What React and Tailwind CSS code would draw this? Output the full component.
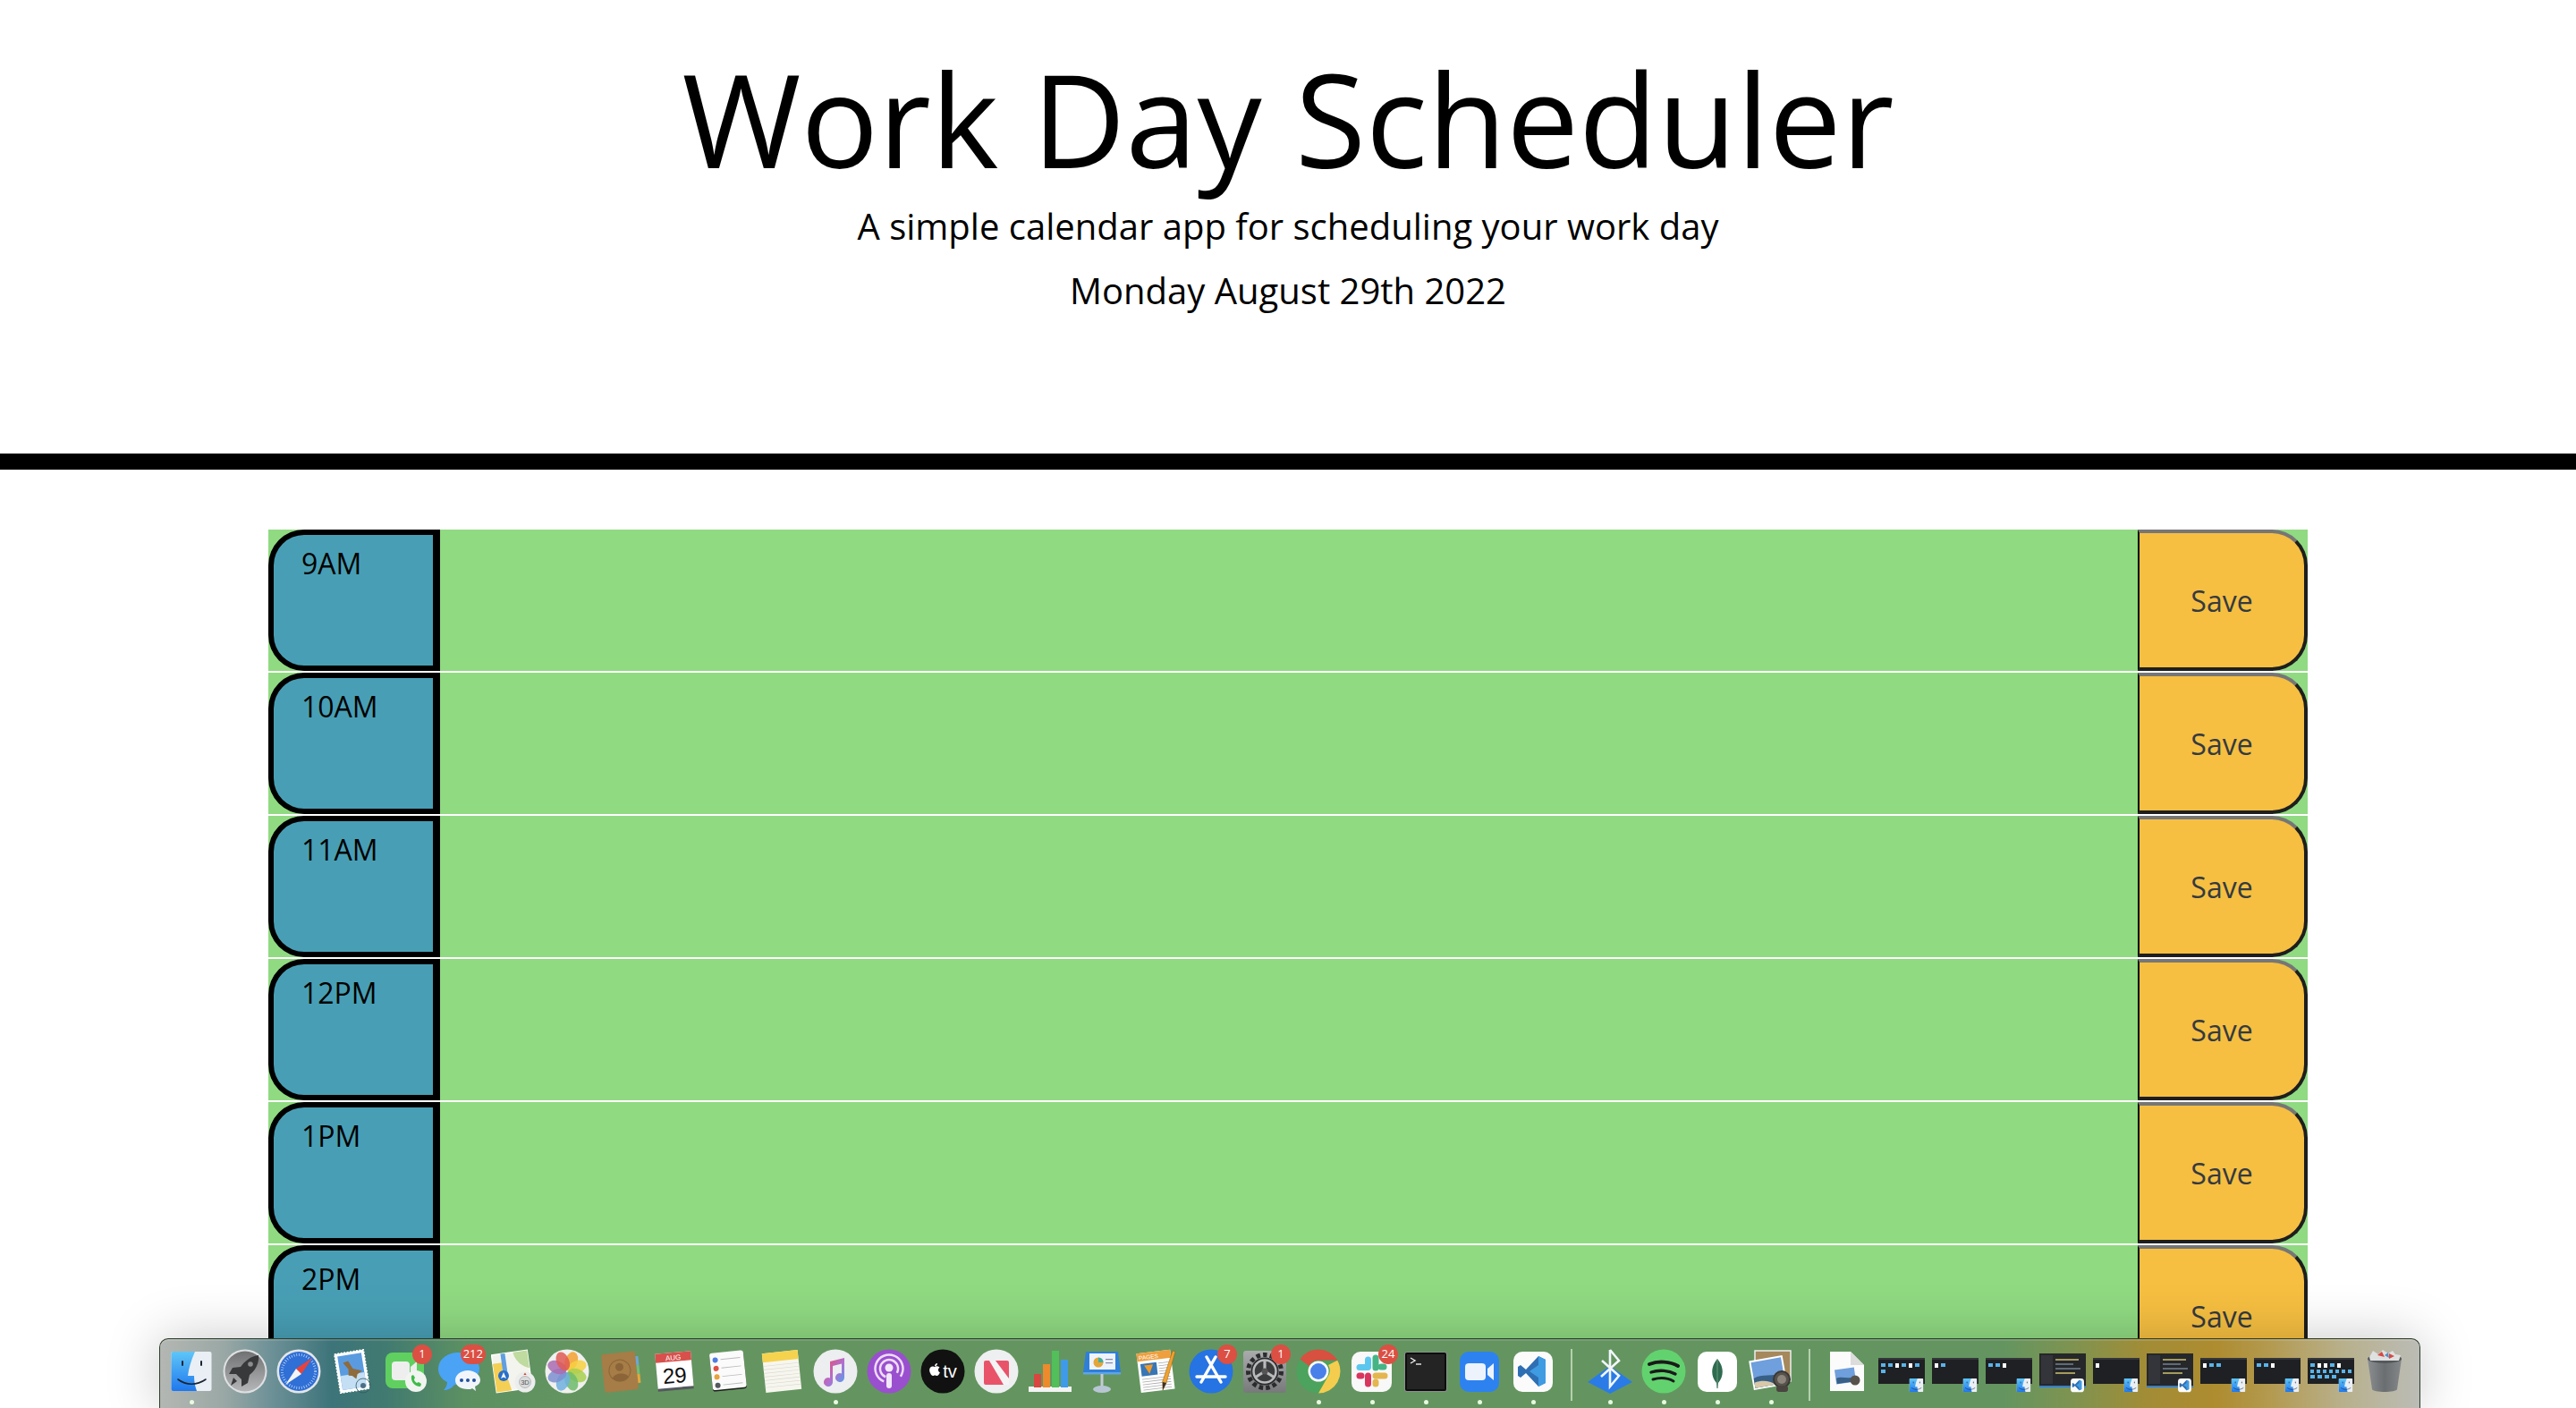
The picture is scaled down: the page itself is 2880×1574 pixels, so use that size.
import React from 'react';
import { FaApple } from 'react-icons/fa';

const hours = ['9AM', '10AM', '11AM', '12PM', '1PM', '2PM', ''];

function Svg({ children, className = '' }) {
  return <svg viewBox="0 0 50 50" width="50" height="50" className={className}>{children}</svg>;
}

const Finder = ({ size = 50 }) => (
  <svg viewBox="0 0 50 50" width={size} height={size}>
    <defs>
      <linearGradient id="fb" x1="0" y1="0" x2="0" y2="1"><stop offset="0" stopColor="#5fc6f7" /><stop offset="1" stopColor="#1f78ee" /></linearGradient>
    </defs>
    <rect x="2.5" y="3" width="45" height="44" rx="2" fill="#e9eff5" />
    <path d="M4.5 3H29C25 12 22 21 21 30H28C28 36 29 42 31 47H4.5A2 2 0 0 1 2.5 45V5A2 2 0 0 1 4.5 3Z" fill="url(#fb)" />
    <path d="M10 34C19 41 31 41 41 34" fill="none" stroke="#1a2433" strokeWidth="1.6" strokeLinecap="round" />
    <rect x="14" y="13" width="2" height="6" rx="1" fill="#1a2433" />
    <rect x="35" y="13" width="2" height="6" rx="1" fill="#1a2433" />
  </svg>
);

const Launchpad = () => (
  <Svg>
    <defs><linearGradient id="lp" x1="0" y1="0" x2="0" y2="1"><stop offset="0" stopColor="#6f7172" /><stop offset="1" stopColor="#b4b6b7" /></linearGradient></defs>
    <circle cx="25" cy="25" r="24.5" fill="#dfe0e1" />
    <circle cx="25" cy="25" r="22.5" fill="url(#lp)" />
    <path d="M40 7C32 8 25 13 20 20L11 21L7 28L15 28L21 34L21 42L28 38L30 29C37 24 41 15 40 7Z" fill="#38393b" />
    <path d="M12 32L16 36L9 41Z" fill="#38393b" />
    <circle cx="31" cy="17" r="2.8" fill="#8b8d8e" />
  </Svg>
);

const Safari = () => (
  <Svg>
    <circle cx="25" cy="25" r="24.5" fill="#e4e6e8" />
    <circle cx="25" cy="25" r="22" fill="#2f6fd6" />
    <circle cx="25" cy="25" r="18.5" fill="none" stroke="#cfe0f7" strokeWidth="3" strokeDasharray="0.7 2.1" />
    <path d="M40 10L22 22L28 28Z" fill="#e8423c" />
    <path d="M10 40L22 22L28 28Z" fill="#f4f4f4" />
  </Svg>
);

const Mail = () => (
  <Svg>
    <g transform="rotate(-9 25 25)">
      <rect x="8" y="3" width="33" height="44" fill="#fff" stroke="#fff" strokeWidth="1.5" strokeDasharray="2 1.5" />
      <rect x="11" y="6" width="27" height="38" fill="#5a9be0" />
      <rect x="11" y="28" width="27" height="16" fill="#c4def4" />
      <path d="M16 14L22 13L26 22L36 26L30 29L28 34L24 30L20 29L21 22Z" fill="#8d6b3d" />
    </g>
    <circle cx="37" cy="41" r="8" fill="none" stroke="#34595f" strokeWidth="0.8" />
    <circle cx="37" cy="41" r="3" fill="#4b6f84" />
  </Svg>
);

const FaceTime = () => (
  <Svg>
    <rect x="2" y="4" width="43" height="40" rx="8" fill="#5fd05f" />
    <rect x="9" y="14" width="20" height="21" rx="4" fill="#eee" />
    <path d="M30 20L37 14V34L30 29Z" fill="#eee" />
    <circle cx="36" cy="36" r="12" fill="#f1f4f1" />
    <path d="M31 30C30 36 34 42 41 42L42 39L39 37L37 38C35 37 34 35 34 34L35 32L33 29Z" fill="#3fbb48" />
  </Svg>
);

const Messages = () => (
  <Svg>
    <path d="M23 4C11 4 1 12 1 22C1 29 5 34 11 37C11 41 9 44 7 46C12 46 16 44 19 40H23C35 40 47 32 47 22C47 12 35 4 23 4Z" fill="#4aa3f5" />
    <path d="M34 24C26 24 20 29 20 35C20 41 26 45 34 45C36 45 38 45 39 44L43 47L42 42C46 40 48 38 48 35C48 29 42 24 34 24Z" fill="#f1f5fa" />
    <circle cx="27" cy="35" r="2" fill="#1f4f9e" /><circle cx="34" cy="35" r="2" fill="#1f4f9e" /><circle cx="41" cy="35" r="2" fill="#1f4f9e" />
  </Svg>
);

const Maps = () => (
  <Svg>
    <g transform="rotate(-8 23 23)">
      <rect x="3" y="4" width="40" height="42" fill="#f4f4ee" stroke="#fff" strokeWidth="1.5" />
      <path d="M27 4H43V24C36 22 28 14 27 4Z" fill="#bfdb9f" />
      <path d="M3 14H14L20 46H7L3 46Z" fill="#f4cf55" />
      <path d="M13 4H18V30H13Z" fill="#5f9fe0" />
    </g>
    <circle cx="14" cy="30" r="6" fill="#2a6fc9" />
    <path d="M14 26L17 33L14 31.5L11 33Z" fill="#fff" />
    <circle cx="38" cy="37" r="11.5" fill="#eceded" />
    <circle cx="38" cy="37" r="6.5" fill="#d9dbdc" stroke="#999" strokeWidth="0.6" />
    <text x="38" y="40" textAnchor="middle" fontSize="7.5" fill="#555" fontFamily="Liberation Sans, sans-serif">3D</text>
    <path d="M38 26.5L39.6 29H36.4Z" fill="#d6422f" />
  </Svg>
);

const petals = ['#f3a12f', '#f6d03f', '#a8cf4f', '#6dbb6a', '#6fb0df', '#7c8fd0', '#a96bb0', '#df5a55'];
const Photos = () => (
  <Svg>
    <circle cx="25" cy="25" r="24.5" fill="#f0f0ee" />
    {petals.map((c, i) => (
      <ellipse key={i} cx="25" cy="13" rx="7" ry="11" fill={c} fillOpacity="0.85" transform={`rotate(${i * 45 + 22} 25 25)`} />
    ))}
  </Svg>
);

const Contacts = () => (
  <Svg>
    <g transform="rotate(-6 25 25)">
      <rect x="42" y="10" width="4" height="10" fill="#6fa6d8" />
      <rect x="42" y="20" width="4" height="10" fill="#6fbf7a" />
      <rect x="42" y="30" width="4" height="10" fill="#e2a83f" />
      <rect x="5" y="4" width="38" height="43" rx="3" fill="#a67c47" />
      <circle cx="24" cy="24" r="12" fill="none" stroke="#8b6537" strokeWidth="1" />
      <circle cx="24" cy="20" r="4.5" fill="#8b6537" />
      <path d="M15 32C17 26 31 26 33 32A12 12 0 0 1 15 32Z" fill="#8b6537" />
    </g>
  </Svg>
);

const Calendar = () => (
  <Svg>
    <g transform="rotate(-5 25 25)">
      <rect x="5" y="5" width="40" height="41" fill="#55595e" />
      <rect x="5" y="4" width="40" height="39" fill="#fff" />
      <rect x="5" y="4" width="40" height="10" fill="#d8504b" />
      <text x="25" y="12.5" textAnchor="middle" fontSize="8" fill="#fff" fontFamily="Liberation Sans, sans-serif">AUG</text>
      <text x="25" y="38" textAnchor="middle" fontSize="24" fill="#111" fontFamily="Liberation Sans, sans-serif">29</text>
    </g>
  </Svg>
);

const Reminders = () => (
  <Svg>
    <g transform="rotate(-6 25 25)">
      <rect x="6" y="4" width="38" height="42" rx="3" fill="#1c1c1c" />
      <rect x="6" y="3" width="38" height="41.5" rx="3" fill="#fbfbfb" />
      {['#4f7ddf', '#dd4f45', '#e8a23b', '#55585c'].map((c, i) => (
        <g key={c}>
          <circle cx="12" cy={11 + i * 9.5} r="3" fill={c} />
          <rect x="18" y={10.5 + i * 9.5} width="22" height="0.9" fill="#bbb" />
        </g>
      ))}
    </g>
  </Svg>
);

const Notes = () => (
  <Svg>
    <g transform="rotate(-6 25 25)">
      <rect x="5" y="3" width="40" height="44" fill="#f7f6ee" />
      <rect x="5" y="3" width="40" height="10" fill="#f5d34e" />
      {[17, 21, 25, 29, 33, 37, 41].map((y) => <rect key={y} x="5" y={y} width="40" height="0.6" fill="#d8d8d2" />)}
    </g>
  </Svg>
);

const Music = () => (
  <Svg>
    <defs><linearGradient id="mn" x1="0" y1="0" x2="1" y2="1"><stop offset="0" stopColor="#f0485f" /><stop offset="0.55" stopColor="#b06fd0" /><stop offset="1" stopColor="#46a6ef" /></linearGradient></defs>
    <circle cx="25" cy="25" r="24.5" fill="#eceef0" />
    <path d="M19 14L35 10V32A5 5 0 1 1 32 27.5V16.5L22 19V37A5 5 0 1 1 19 32.5Z" fill="url(#mn)" />
  </Svg>
);

const Podcasts = () => (
  <Svg>
    <circle cx="25" cy="25" r="24.5" fill="#9a4fcf" />
    <circle cx="25" cy="22" r="15.5" fill="none" stroke="#eedcf8" strokeWidth="2.5" strokeDasharray="76 22" transform="rotate(112 25 22)" />
    <circle cx="25" cy="22" r="10" fill="none" stroke="#eedcf8" strokeWidth="2.5" strokeDasharray="48 15" transform="rotate(112 25 22)" />
    <circle cx="25" cy="21" r="4.5" fill="#f2e7f9" />
    <rect x="22" y="27" width="6" height="17" rx="3" fill="#f2e7f9" />
  </Svg>
);

const Tv = () => (
  <Svg>
    <circle cx="25" cy="25" r="24.5" fill="#111" />
    <FaApple x="8" y="15" size="16" color="#fff" />
    <text x="33" y="32" textAnchor="middle" fontSize="20" fill="#fff" fontFamily="Liberation Sans, sans-serif">tv</text>
  </Svg>
);

const News = () => (
  <Svg>
    <circle cx="25" cy="25" r="24.5" fill="#eeeff0" />
    <rect x="11" y="13" width="28" height="27" rx="2" fill="#e9536a" />
    <path d="M17 13H24L39 33V40H33Z" fill="#f4f4f5" />
  </Svg>
);

const Numbers = () => (
  <Svg>
    <rect x="1" y="42" width="48" height="6" fill="#f3f3f3" />
    <rect x="7" y="28" width="8" height="15" fill="#d8463f" />
    <rect x="17" y="17" width="8" height="26" fill="#ec8a2c" />
    <rect x="27" y="2" width="8" height="41" fill="#52bf5b" />
    <rect x="37" y="12" width="8" height="31" fill="#3f9be8" />
  </Svg>
);

const Keynote = () => (
  <Svg>
    <path d="M5 3H41L44 26H2Z" fill="#2f7fd8" />
    <rect x="9" y="5" width="29" height="18" fill="#edf3fa" />
    <circle cx="19" cy="15" r="5.5" fill="#e4a53a" />
    <path d="M19 15V9.5A5.5 5.5 0 0 1 24.5 15Z" fill="#3fb0a0" />
    <rect x="27" y="11" width="8" height="1.2" fill="#88a" /><rect x="27" y="15" width="8" height="1.2" fill="#88a" />
    <rect x="2" y="26" width="42" height="2.5" fill="#5fa4e5" />
    <rect x="21.5" y="28" width="3" height="15" fill="#c4ccd3" />
    <ellipse cx="23" cy="45" rx="10" ry="4" fill="#b8c6d4" />
  </Svg>
);

const Pages = () => (
  <Svg>
    <g transform="rotate(-7 22 25)">
      <rect x="4" y="3" width="38" height="44" fill="#fff" />
      <rect x="4" y="3" width="38" height="9" fill="#ee9f3e" />
      <text x="6" y="10.5" fontSize="6.5" fill="#fff" fontFamily="Liberation Sans, sans-serif">PAGES</text>
      <rect x="7" y="15" width="18" height="14" fill="#3876b5" />
      <path d="M11 17H21L16 27Z" fill="#f09a2a" />
      {[16, 19, 22, 25, 28].map((y) => <rect key={y} x="27" y={y} width="12" height="0.8" fill="#aaa" />)}
      {[32, 35, 38, 41, 44].map((y) => <rect key={y} x="7" y={y} width="32" height="0.8" fill="#aaa" />)}
    </g>
    <path d="M42 2L45 3L35 38L31 46L30.5 37Z" fill="#f0a12e" stroke="#8a5a16" strokeWidth="0.5" />
    <path d="M31 37L35 38L31 46Z" fill="#333" />
  </Svg>
);

const AppStore = () => (
  <Svg>
    <circle cx="25" cy="25" r="24.5" fill="#2673e3" />
    <g stroke="#fff" strokeWidth="3.4" strokeLinecap="round">
      <path d="M30 9L14 37" /><path d="M20 9L36 37" /><path d="M9 31H41" />
    </g>
  </Svg>
);

const Prefs = () => (
  <Svg>
    <defs><linearGradient id="pf" x1="0" y1="0" x2="0" y2="1"><stop offset="0" stopColor="#a9abad" /><stop offset="1" stopColor="#77797b" /></linearGradient></defs>
    <rect x="1" y="2" width="48" height="47" rx="3" fill="url(#pf)" />
    <circle cx="25" cy="25" r="18.5" fill="none" stroke="#2b2b2d" strokeWidth="5" strokeDasharray="4.5 3.2" />
    <circle cx="25" cy="25" r="15.5" fill="#2b2b2d" />
    <circle cx="25" cy="25" r="12.5" fill="#3b3c3e" stroke="#b9babb" strokeWidth="2.5" />
    <g stroke="#b9babb" strokeWidth="3.2"><path d="M25 25V12" /><path d="M25 25L14 32" /><path d="M25 25L36 32" /></g>
    <circle cx="25" cy="25" r="3.5" fill="#555" />
  </Svg>
);

const Chrome = () => (
  <Svg>
    <circle cx="25" cy="25" r="24.5" fill="#4ca35d" />
    <path d="M25 .5A24.5 24.5 0 0 1 46.2 12.7H25A12 12 0 0 0 14.5 19L4.5 11.5A24.5 24.5 0 0 1 25 .5Z" fill="#d8503f" />
    <path d="M46.2 12.7A24.5 24.5 0 0 1 25 49.5L35.5 31A12 12 0 0 0 36 18Z" fill="#f5cd4e" />
    <circle cx="25" cy="25" r="11.5" fill="#fff" />
    <circle cx="25" cy="25" r="9" fill="#4a80ea" />
  </Svg>
);

const Slack = () => (
  <Svg>
    <rect x="2" y="3" width="45" height="45" rx="10" fill="#f8f8f8" />
    <g strokeWidth="7" strokeLinecap="round" fill="none">
      <path d="M20.5 12V20" stroke="#5cc7ee" /><path d="M11 20.5H20" stroke="#5cc7ee" />
      <path d="M29 10V21" stroke="#46b586" /><path d="M38 20H35" stroke="#46b586" />
      <path d="M29 30H39" stroke="#e4b650" /><path d="M29 39V37" stroke="#e4b650" />
      <path d="M20.5 30V39" stroke="#d9365f" /><path d="M11 30H13" stroke="#d9365f" />
    </g>
  </Svg>
);

const Terminal = () => (
  <Svg>
    <rect x="1" y="3" width="48" height="45" rx="3" fill="#8b8f8c" />
    <rect x="2" y="4" width="46" height="43" rx="2" fill="#0d0d0d" />
    <rect x="4" y="6" width="42" height="39" fill="#242424" />
    <path d="M8 10L13 13L8 16" fill="none" stroke="#eee" strokeWidth="1.4" />
    <path d="M14 17H20" stroke="#eee" strokeWidth="1.4" />
  </Svg>
);

const ZoomApp = () => (
  <Svg>
    <rect x="3" y="3" width="44" height="45" rx="10" fill="#2d82f0" />
    <rect x="9" y="16" width="23" height="19" rx="4" fill="#edf3fd" />
    <path d="M34 22L41 16V35L34 29Z" fill="#edf3fd" />
  </Svg>
);

const VsCode = ({ size = 50 }) => (
  <svg viewBox="0 0 50 50" width={size} height={size}>
    <rect x="3" y="3" width="44" height="45" rx="10" fill="#fbfbfb" />
    <path d="M31 8L39 12V38L31 42L17 27L11 32L8 30V20L11 18L17 23Z" fill="#2e6fb3" />
    <path d="M31 8L39 12V38L31 42L31 32L21 25L31 18Z" fill="#3f9be2" />
  </svg>
);

const Bluetooth = () => (
  <Svg>
    <path d="M25 19L50 37L25 50L0 37Z" fill="#2a7be6" />
    <path d="M25 1V42L35 30L16 13" fill="none" stroke="#f2f6fb" strokeWidth="2.6" />
    <path d="M25 1L35 13L15 31" fill="none" stroke="#f2f6fb" strokeWidth="2.6" />
  </Svg>
);

const Spotify = () => (
  <Svg>
    <circle cx="25" cy="25" r="24.5" fill="#62d26f" />
    <g fill="none" stroke="#1a1a1a" strokeLinecap="round">
      <path d="M9 17C19 13 32 14 41 19" strokeWidth="4" />
      <path d="M11 26C20 23 31 24 38 28" strokeWidth="3.4" />
      <path d="M13 34C20 32 29 32 36 36" strokeWidth="3" />
    </g>
  </Svg>
);

const Mongo = () => (
  <Svg>
    <rect x="3" y="3" width="44" height="45" rx="10" fill="#fff" />
    <path d="M25 11C32 19 33 30 26 38L25.5 44H24.5L24 38C17 30 18 19 25 11Z" fill="#2f6b4f" />
    <path d="M25 11V44" stroke="#8db8a0" strokeWidth="0.6" />
  </Svg>
);

const Preview = () => (
  <Svg>
    <rect x="7" y="2" width="40" height="34" fill="#a5885c" stroke="#eee" strokeWidth="1.5" />
    <g transform="rotate(-10 22 28)">
      <rect x="3" y="10" width="38" height="33" fill="#fff" />
      <rect x="5" y="12" width="34" height="29" fill="#6f9fdc" />
      <path d="M5 30C15 26 25 32 39 30V41H5Z" fill="#385f86" />
      <path d="M5 35C15 33 22 36 28 41H5Z" fill="#d8c8a8" />
    </g>
    <circle cx="37" cy="34" r="9" fill="#58524c" stroke="#3a3733" strokeWidth="2" />
    <circle cx="37" cy="34" r="5" fill="#8b857c" />
    <rect x="31" y="41" width="13" height="7" rx="3" fill="#4a4440" />
  </Svg>
);

const Doc = () => (
  <Svg>
    <path d="M5 3H28L43 18V47H5Z" fill="#fbfbfb" />
    <path d="M28 3V18H43Z" fill="#dcdcdc" />
    <rect x="11" y="22" width="22" height="16" fill="#6f9fdc" transform="rotate(-8 22 30)" />
    <path d="M12 33C18 30 24 34 33 31L34 36L13 39Z" fill="#385f86" />
    <circle cx="33" cy="35" r="5.5" fill="#58524c" />
  </Svg>
);

const Trash = () => (
  <Svg>
    <defs><linearGradient id="tr" x1="0" y1="0" x2="1" y2="0"><stop offset="0" stopColor="#8b8e90" /><stop offset="0.5" stopColor="#6b6e70" /><stop offset="1" stopColor="#85888a" /></linearGradient></defs>
    <path d="M6 11L11 45C12 49 38 49 39 45L44 11Z" fill="url(#tr)" />
    <ellipse cx="25" cy="11" rx="19" ry="5" fill="#55585a" />
    <path d="M8 9L12 2L18 6L23 1L29 5L34 2L37 6L43 7L41 13L9 13Z" fill="#dfe0e0" />
    <path d="M17 7L22 3L25 9ZM30 5L36 8L30 11Z" fill="#d34a44" />
    <path d="M25 7L29 4L30 10Z" fill="#4f8fc8" />
  </Svg>
);

const Divider = () => <div className="mx-[12px] mt-[11px] h-[58px] w-[2px] bg-[#b5d0ae]" />;

const Badge = ({ children }) => (
  <span className="absolute top-[6px] right-[1px] z-10 flex h-[22px] min-w-[22px] items-center justify-center rounded-full bg-[#dc4f43] px-[3px] text-[13px] text-white">
    {children}
  </span>
);

const Dot = () => <span className="absolute bottom-[5px] left-[28px] h-[5px] w-[5px] rounded-full bg-[#e7fbe0]" />;

function Cell({ children, badge, dot }) {
  return (
    <div className="relative flex h-[78px] w-[60px] shrink-0 justify-center pt-[11px]">
      {children}
      {badge && <Badge>{badge}</Badge>}
      {dot && <Dot />}
    </div>
  );
}

function Thumb({ rows, code }) {
  if (code) {
    return (
      <Cell>
        <div className="mt-[5px] flex h-[38px] w-[52px] gap-[3px] border-b-2 border-[#2f7fd8] bg-[#26272a] p-[2px]">
          <div className="h-full w-[13px] bg-[#33353a]" />
          <div className="flex flex-col gap-[3px] pt-[4px]">
            <div className="h-[2px] w-[26px] bg-[#a59b5e]" />
            <div className="h-[2px] w-[20px] bg-[#5f6b78]" />
            <div className="h-[2px] w-[28px] bg-[#5f6b78]" />
            <div className="h-[2px] w-[22px] bg-[#a59b5e]" />
          </div>
        </div>
        <div className="absolute top-[43px] right-[5px] h-[17px] w-[17px]"><VsCode size={17} /></div>
      </Cell>
    );
  }
  return (
    <Cell>
      <div className="mt-[10px] flex h-[29px] w-[52px] flex-col gap-[2px] border-t-2 border-[#34363a] bg-[#1f2023] px-[3px] pt-[4px]">
        {rows.map((row, i) => (
          <div key={i} className="flex gap-[3px]">
            {row.split('').map((c, j) => (
              <span key={j} className={c === 'd' ? 'h-[5px] w-[4px] bg-white' : 'h-[4px] w-[5px] bg-[#58b4ea]'} />
            ))}
          </div>
        ))}
      </div>
      <div className="absolute top-[43px] right-[5px] h-[17px] w-[17px]"><Finder size={17} /></div>
    </Cell>
  );
}

function Dock() {
  return (
    <div className="absolute left-[178px] bottom-0 flex h-[78px] w-[2528px] rounded-t-[10px] border border-b-0 border-[#2e3d2c] bg-[linear-gradient(90deg,#b4b7b3_0%,#9aa8a5_2.8%,#6f9298_4.8%,#3c747a_7.6%,#417a70_10%,#5c9062_13.5%,#649560_18.7%,#649560_81.6%,#7f9350_84.7%,#a28c36_87.9%,#ae8c30_91%,#b39a50_93.4%,#b8b08c_96.6%,#bbbcb6_100%)] pl-[5px] shadow-[0_0_60px_rgba(0,0,0,0.22),inset_0_2px_0_rgba(255,255,255,0.12)]">
      <Cell dot><Finder /></Cell>
      <Cell><Launchpad /></Cell>
      <Cell><Safari /></Cell>
      <Cell><Mail /></Cell>
      <Cell badge="1"><FaceTime /></Cell>
      <Cell badge="212"><Messages /></Cell>
      <Cell><Maps /></Cell>
      <Cell><Photos /></Cell>
      <Cell><Contacts /></Cell>
      <Cell><Calendar /></Cell>
      <Cell><Reminders /></Cell>
      <Cell><Notes /></Cell>
      <Cell dot><Music /></Cell>
      <Cell><Podcasts /></Cell>
      <Cell><Tv /></Cell>
      <Cell><News /></Cell>
      <Cell><Numbers /></Cell>
      <Cell><Keynote /></Cell>
      <Cell><Pages /></Cell>
      <Cell badge="7"><AppStore /></Cell>
      <Cell badge="1"><Prefs /></Cell>
      <Cell dot><Chrome /></Cell>
      <Cell badge="24" dot><Slack /></Cell>
      <Cell dot><Terminal /></Cell>
      <Cell dot><ZoomApp /></Cell>
      <Cell dot><VsCode /></Cell>
      <Divider />
      <Cell dot><Bluetooth /></Cell>
      <Cell dot><Spotify /></Cell>
      <Cell dot><Mongo /></Cell>
      <Cell dot><Preview /></Cell>
      <Divider />
      <Cell><Doc /></Cell>
      <Thumb rows={['ffdfdf', 'f']} />
      <Thumb rows={['df']} />
      <Thumb rows={['ffd']} />
      <Thumb code />
      <Thumb rows={['d']} />
      <Thumb code />
      <Thumb rows={['dff']} />
      <Thumb rows={['ffd']} />
      <Thumb rows={['fddfd', 'fffffff', 'ffff']} />
      <Cell><Trash /></Cell>
    </div>
  );
}

export default function App() {
  return (
    <div className="relative h-[1574px] overflow-hidden bg-white font-['Open_Sans',sans-serif]">
      <header className="h-[525px] border-b-[18px] border-black pt-[46px] text-center text-black">
        <h1 className="text-[144px] leading-[1.2]">Work Day Scheduler</h1>
        <p className="mt-[4px] text-[40px] leading-[60px]">A simple calendar app for scheduling your work day</p>
        <p className="mt-[12px] text-[40px] leading-[60px]">Monday August 29th 2022</p>
      </header>

      <div className="mx-[300px] mt-[67px]">
        {hours.map((hour, i) => (
          <div key={i} className="mb-[2px] flex h-[158px] bg-[#90da82]">
            <div className="w-[192px] rounded-l-[40px] border-y-[6px] border-r-[8px] border-l-[6px] border-black bg-[#489fb5] pt-[8px] pl-[31px] text-[32px] leading-[48px] text-black">
              {hour}
            </div>
            <div className="flex-1" />
            <button className="w-[190px] rounded-r-[40px] border-t-[4px] border-r-[4px] border-b-[4px] border-l-[2px] border-t-[#767676] border-r-[#1e1e1e] border-b-[#1e1e1e] border-l-black bg-[#f6bf41] pt-[2px] text-[32px] text-[#343a40]">
              {hour && 'Save'}
            </button>
          </div>
        ))}
      </div>

      <Dock />
    </div>
  );
}
